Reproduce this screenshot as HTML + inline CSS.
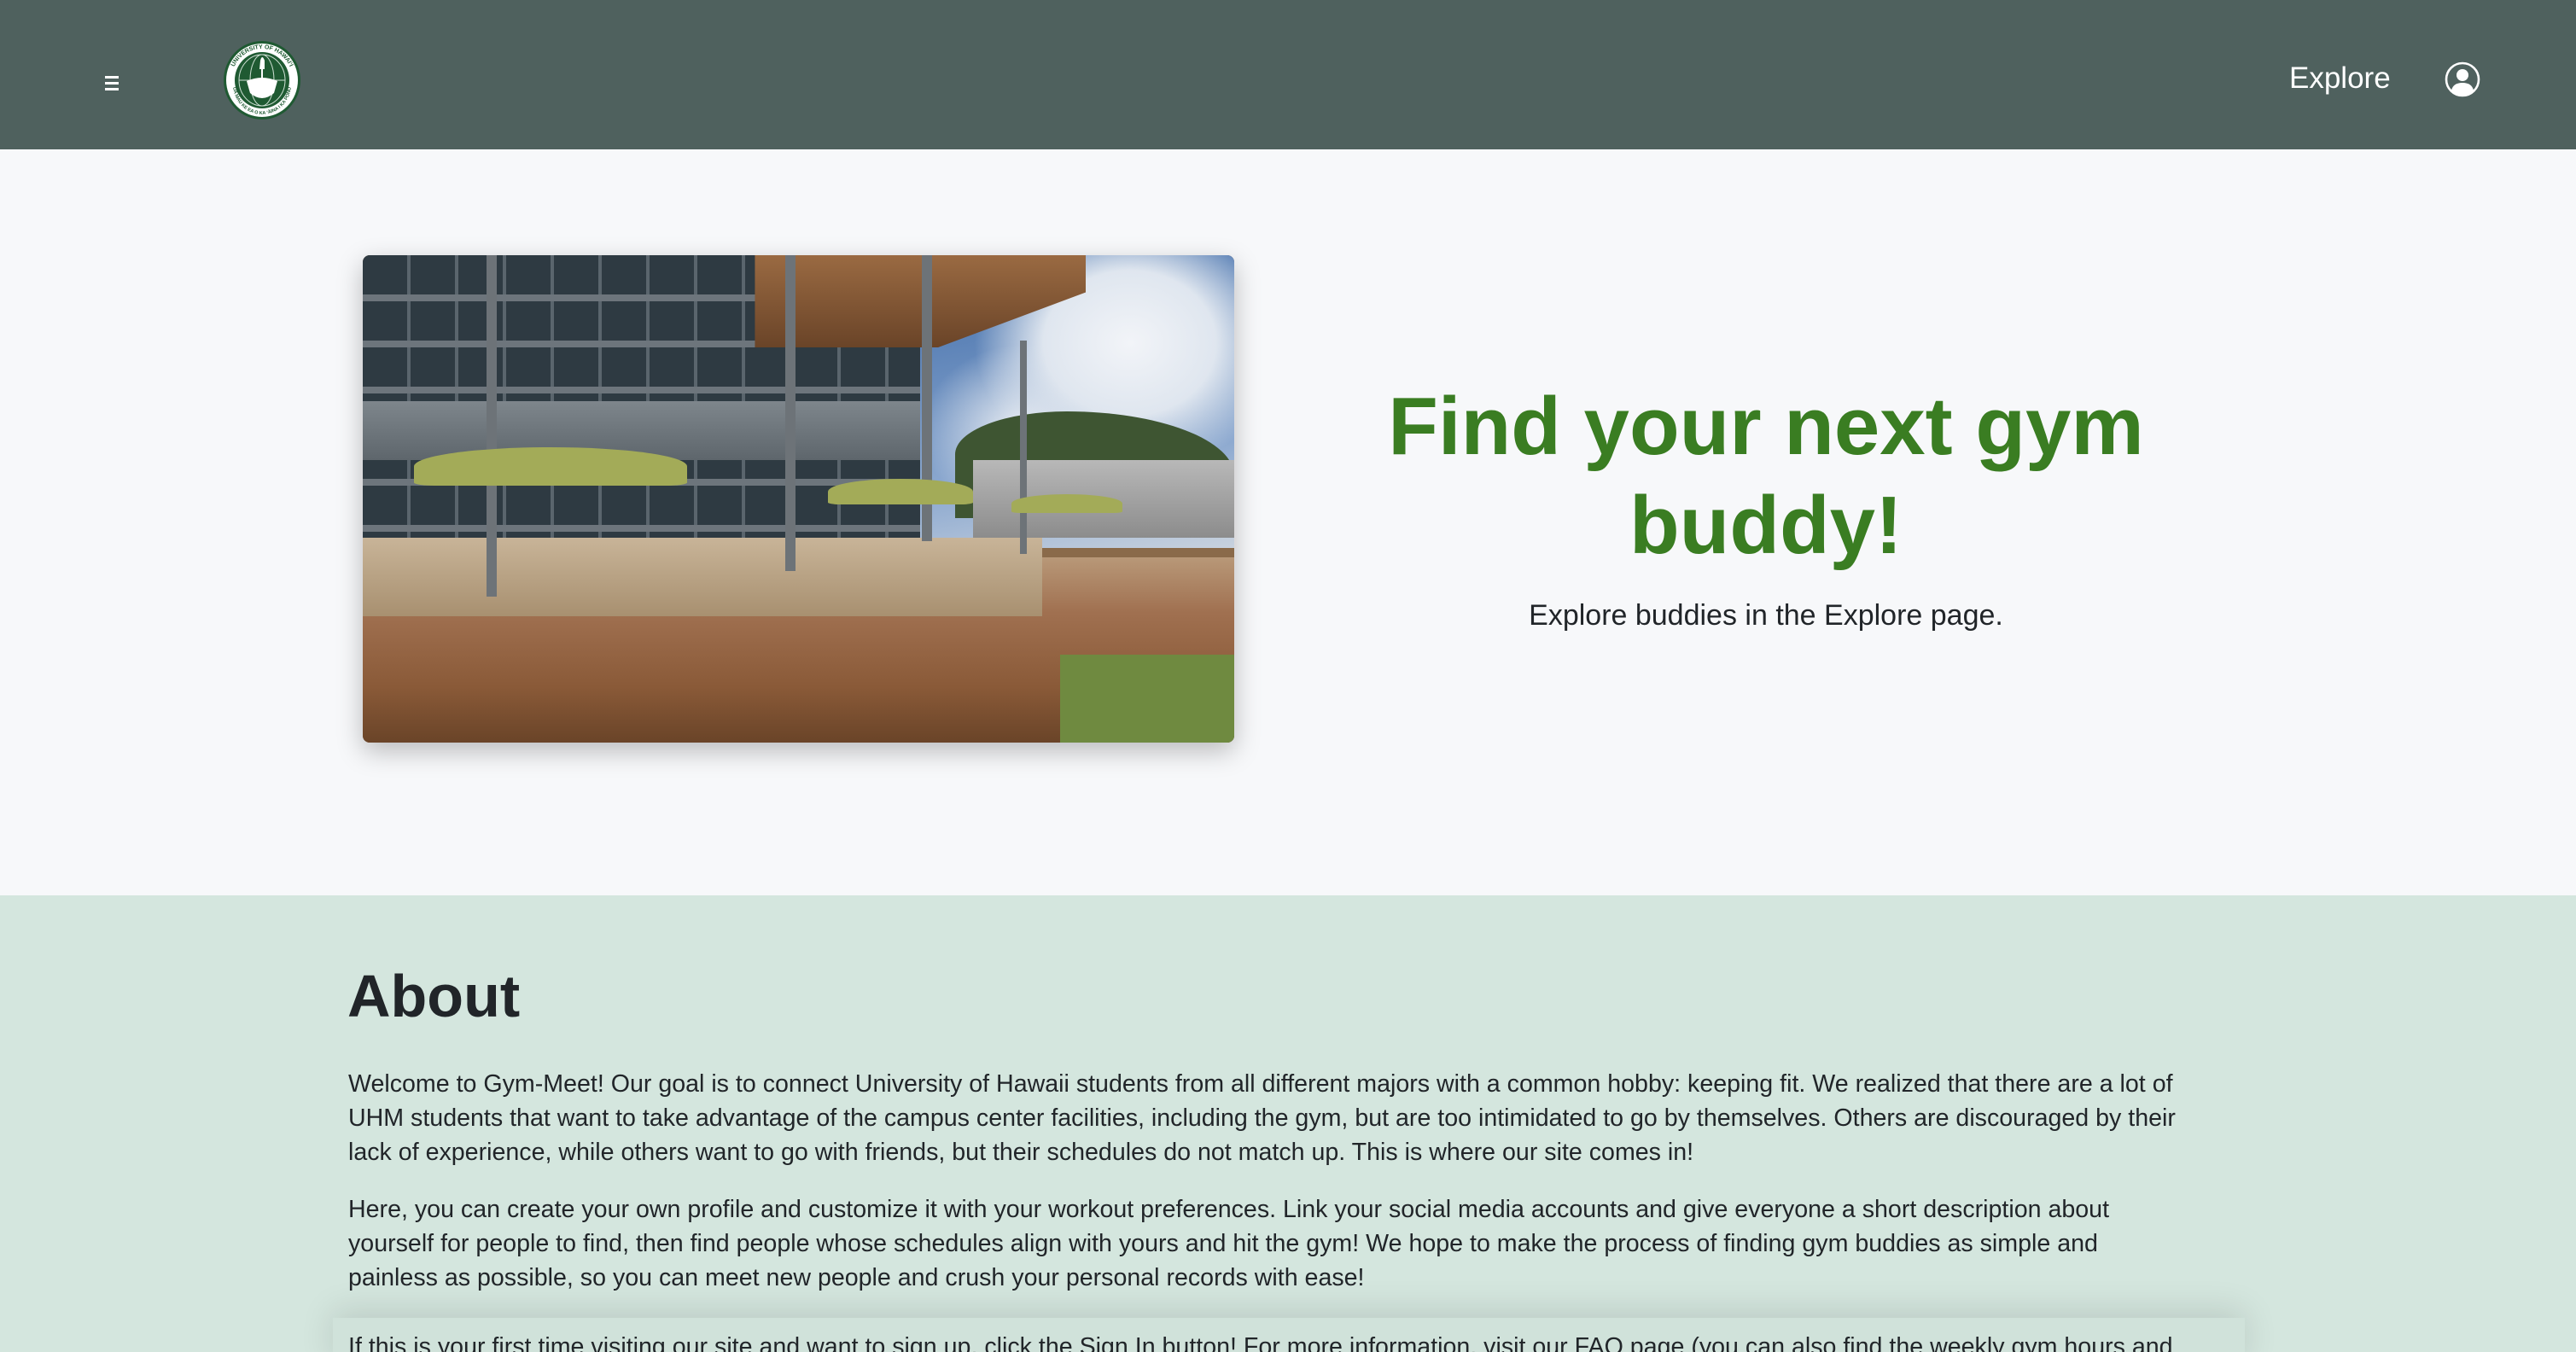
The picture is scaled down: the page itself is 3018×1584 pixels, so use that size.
<!DOCTYPE html>
<html><head><meta charset="utf-8"><style>
*{margin:0;padding:0;box-sizing:border-box}
html,body{width:3018px;height:1584px;overflow:hidden}
body{font-family:"Liberation Sans",sans-serif;background:#f7f8fa;position:relative}
.nav{position:absolute;left:0;top:0;width:3018px;height:175px;background:#4f615e}
.ham{position:absolute;left:123px;top:89px;width:16px}
.ham i{display:block;height:3px;background:#fff;margin-bottom:4px}
.logo{position:absolute;left:261px;top:47px;width:92px;height:94px}
.explore{position:absolute;left:2682px;top:72px;color:#fff;font-size:35px}
.user{position:absolute;left:2864px;top:72px}
.hero{position:absolute;left:0;top:175px;width:3018px;height:874px;background:#f7f8fa}
.img{position:absolute;left:425px;top:124px;width:1021px;height:571px;border-radius:8px;overflow:hidden;box-shadow:0 10px 30px rgba(0,0,0,.25);background:#8a6a4a}
.img div{position:absolute}
.sky{left:60%;top:0;width:40%;height:60%;background:radial-gradient(ellipse at 70% 30%,#f2f4f8 0,#dfe6ef 25%,transparent 45%),radial-gradient(ellipse at 40% 60%,#eef1f5 0,transparent 35%),linear-gradient(170deg,#3d6aa8,#8eaad0 70%,#c8d2de)}
.hill{left:68%;top:32%;width:32%;height:22%;background:#3e5532;border-radius:40% 60% 0 0}
.bldg2{left:70%;top:42%;width:30%;height:16%;background:linear-gradient(180deg,#b8b8b8,#8c8c8c)}
.bld{left:0;top:0;width:64%;height:63%;background:repeating-linear-gradient(180deg,transparent 0 46px,#6d757c 46px 54px),repeating-linear-gradient(90deg,#2e3a42 0 52px,#5a656d 52px 56px)}
.band{left:0;top:30%;width:64%;height:12%;background:linear-gradient(180deg,#7e868c,#5e666c)}
.roof{left:45%;top:0;width:38%;height:19%;background:linear-gradient(180deg,#9a6a42,#6a4428);clip-path:polygon(0 0,100% 0,100% 40%,55% 100%,0 100%)}
.pole{background:#6d7378;width:12px}
.floor{left:0;top:62%;width:100%;height:38%;background:linear-gradient(180deg,#b89878 0,#a07050 30%,#8a5a38 70%,#6a4428)}
.step{left:0;top:58%;width:78%;height:16%;background:linear-gradient(180deg,#c8b498,#a89070)}
.grass{left:80%;top:82%;width:20%;height:18%;background:#6f8a40}
.um{background:#a3ab58;border-radius:50% 50% 8% 8%}
.p{position:absolute;left:408px;width:2190px;font-size:28.6px;line-height:40px;color:#212529}
</style></head><body>
<div class="nav">
 <div class="ham"><i></i><i></i><i></i></div>
 <svg class="logo" viewBox="0 0 92 94">
  <ellipse cx="46" cy="47" rx="45" ry="46" fill="#1f5a32"/>
  <ellipse cx="46" cy="47" rx="42" ry="43" fill="#fff"/>
  <ellipse cx="46" cy="47" rx="32" ry="33" fill="#1f5a32"/>
  <ellipse cx="46" cy="47" rx="27" ry="30" fill="none" stroke="#cfe0d4" stroke-width="1"/>
  <ellipse cx="46" cy="47" rx="14" ry="30" fill="none" stroke="#cfe0d4" stroke-width="1"/>
  <line x1="19" y1="47" x2="73" y2="47" stroke="#cfe0d4"/>
  <path d="M28 48 Q46 40 64 48 L60 62 Q46 74 32 62Z" fill="#fff"/>
  <path d="M44 24 Q46 16 49 24 L49 34 L43 34Z" fill="#fff"/>
  <rect x="45" y="34" width="2" height="30" fill="#fff"/>
  <defs><path id="c1" d="M10 47 A36 37 0 0 1 82 47"/><path id="c2" d="M12 52 A34 35 0 0 0 80 52"/></defs>
  <text font-size="7" font-weight="bold" fill="#1f5a32" font-family="Liberation Sans,sans-serif"><textPath href="#c1" startOffset="50%" text-anchor="middle">UNIVERSITY OF HAWAIʻI</textPath></text>
  <text font-size="5.5" font-weight="bold" fill="#1f5a32" font-family="Liberation Sans,sans-serif"><textPath href="#c2" startOffset="50%" text-anchor="middle">UA MAU KE EA O KA ʻĀINA I KA PONO</textPath></text>
 </svg>
 <div class="explore">Explore</div>
 <svg class="user" width="42" height="42" viewBox="0 0 42 42">
  <circle cx="21" cy="21" r="19" fill="none" stroke="#fff" stroke-width="2.6"/>
  <circle cx="21" cy="16" r="7" fill="#fff"/>
  <path d="M8 34 Q10 25 21 25 Q32 25 34 34 Q28 40 21 40 Q14 40 8 34Z" fill="#fff"/>
 </svg>
</div>
<div class="hero">
 <div class="img">
  <div class="sky"></div><div class="hill"></div><div class="bldg2"></div>
  <div class="bld"></div><div class="band"></div><div class="roof"></div>
  <div class="floor"></div><div class="step"></div><div class="grass"></div>
  <div class="pole" style="left:145px;top:0;height:400px"></div>
  <div class="pole" style="left:495px;top:0;height:370px"></div>
  <div class="pole" style="left:655px;top:0;height:335px"></div>
  <div class="pole" style="left:770px;top:100px;height:250px;width:8px"></div>
  <div class="um" style="left:60px;top:225px;width:320px;height:45px"></div>
  <div class="um" style="left:545px;top:262px;width:170px;height:30px"></div>
  <div class="um" style="left:760px;top:280px;width:130px;height:22px"></div>
 </div>
 <div style="position:absolute;left:1469px;width:1200px;top:267px;text-align:center;color:#3a7d22;font-weight:bold;font-size:96px;line-height:116px">Find your next gym<br>buddy!</div>
 <div style="position:absolute;left:1469px;width:1200px;top:527px;text-align:center;color:#212529;font-size:34px">Explore buddies in the Explore page.</div>
</div>
<div style="position:absolute;left:0;top:1049px;width:3018px;height:535px;background:#d4e6de">
 <div style="position:absolute;left:390px;top:495px;width:2240px;height:60px;background:#d0e2da;box-shadow:0 -8px 40px rgba(0,0,0,.12)"></div>
 <div style="position:absolute;left:407px;top:78px;font-size:70px;color:#212529;font-weight:bold">About</div>
 <div class="p" style="top:201px">Welcome to Gym-Meet! Our goal is to connect University of Hawaii students from all different majors with a common hobby: keeping fit. We realized that there are a lot of UHM students that want to take advantage of the campus center facilities, including the gym, but are too intimidated to go by themselves. Others are discouraged by their lack of experience, while others want to go with friends, but their schedules do not match up. This is where our site comes in!</div>
 <div class="p" style="top:348px;width:2150px">Here, you can create your own profile and customize it with your workout preferences. Link your social media accounts and give everyone a short description about yourself for people to find, then find people whose schedules align with yours and hit the gym! We hope to make the process of finding gym buddies as simple and painless as possible, so you can meet new people and crush your personal records with ease!</div>
 <div class="p" style="top:509px;white-space:nowrap">If this is your first time visiting our site and want to sign up, click the Sign In button! For more information, visit our FAQ page (you can also find the weekly gym hours and</div>
</div>
</body></html>
